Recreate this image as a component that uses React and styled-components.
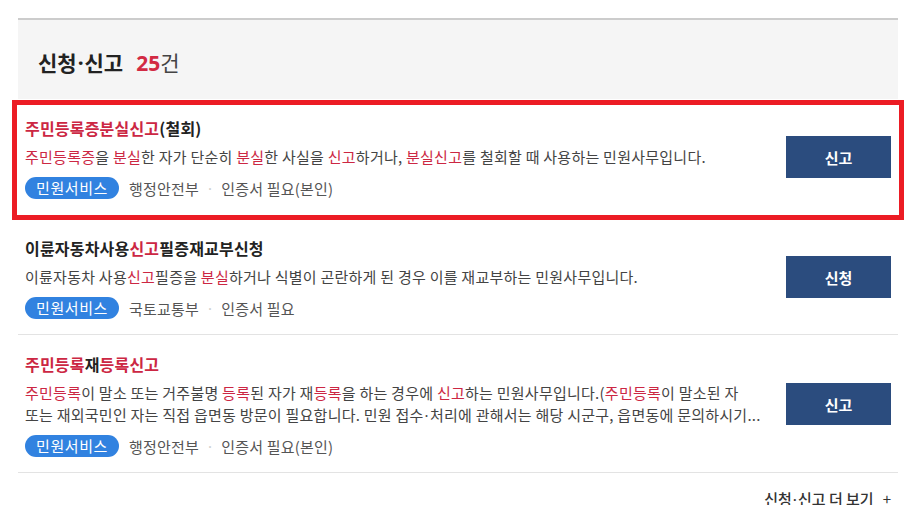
import React from 'react'
import styled, { createGlobalStyle } from 'styled-components'

const GlobalStyle = createGlobalStyle`
  html, body {
    margin: 0;
    padding: 0;
    background: #fff;
  }
  body {
    font-family: "Noto Sans CJK KR", "Noto Sans", sans-serif;
    color: #333;
  }
`

const Page = styled.div`
  padding: 18px 9px 0 18px;
  width: 880px;
`

const Panel = styled.section`
  border-top: 2px solid #cccccc;
`

const Header = styled.div`
  background: #f5f5f5;
  padding: 27px 20px 22px;
  height: 30px;
`

const HeaderTitle = styled.h2`
  margin: 0;
  font-size: 21px;
  line-height: 30px;
  font-weight: 700;
  color: #222;
`

// middle dot from a latin font so it stays narrow
const Mid = styled.span`
  font-family: "Noto Sans", sans-serif;
  margin: 0 1px;
`

const Count = styled.span`
  margin-left: 13px;
  color: #d22a43;
  font-family: "Open Sans", "Noto Sans CJK KR", sans-serif;
  font-weight: 700;
`

const CountUnit = styled.span`
  font-weight: 400;
  color: #444;
`

const List = styled.ul`
  list-style: none;
  margin: 0;
  padding: 0;
`

const Item = styled.li`
  position: relative;
  display: flex;
  align-items: center;
  gap: 24px;
  padding: 16px 7px ${(p) => (p.$highlight ? '19px' : '15px')};
  border-bottom: 1px solid #e3e3e3;

  ${(p) =>
    p.$highlight &&
    `
    &::after {
      content: '';
      position: absolute;
      top: 1px;
      bottom: -2px;
      left: -6px;
      right: -6px;
      border: 5px solid #ec1c24;
      pointer-events: none;
    }
  `}
`

const Body = styled.div`
  flex: 1;
  min-width: 0;
`

const Title = styled.h3`
  margin: 0;
  font-size: 16px;
  line-height: 26px;
  font-weight: 700;
  color: #222;
  letter-spacing: 0.2px;
`

const Hl = styled.span`
  color: #cc2743;
`

const Desc = styled.p`
  margin: 5px 0 0;
  font-size: 15px;
  line-height: 22px;
  color: #444;
  letter-spacing: 0.25px;
`

const DescLine = styled.span`
  display: block;
  white-space: nowrap;
`

const Meta = styled.div`
  display: flex;
  align-items: center;
  margin-top: 9px;
  font-size: 15px;
  color: #555;
  letter-spacing: 0.2px;
`

const Badge = styled.span`
  display: inline-block;
  height: 22px;
  line-height: 22px;
  padding: 0 11px;
  border-radius: 11px;
  background: #3182e0;
  color: #fff;
  font-size: 15px;
  letter-spacing: 0.6px;
  margin-right: 10px;
`

const Dot = styled.span`
  color: #cfcfcf;
  margin: 0 9px;
  font-family: "Noto Sans", sans-serif;
`

const Action = styled.button`
  flex: none;
  width: 105px;
  height: 42px;
  border: 0;
  background: #2b4c7e;
  color: #fff;
  font-family: inherit;
  font-size: 15px;
  font-weight: 700;
  cursor: pointer;
`

const More = styled.div`
  display: flex;
  justify-content: flex-end;
  padding: 15px 7px 0;
`

const MoreLink = styled.a`
  font-size: 15px;
  font-weight: 500;
  color: #333;
  text-decoration: none;
`

const Plus = styled.span`
  margin-left: 9px;
  font-weight: 400;
`

const items = [
  {
    title: (
      <>
        <Hl>주민등록증분실신고</Hl>(철회)
      </>
    ),
    desc: [
      <>
        <Hl>주민등록증</Hl>을 <Hl>분실</Hl>한 자가 단순히 <Hl>분실</Hl>한 사실을 <Hl>신고</Hl>
        하거나, <Hl>분실신고</Hl>를 철회할 때 사용하는 민원사무입니다.
      </>,
    ],
    org: '행정안전부',
    cert: '인증서 필요(본인)',
    action: '신고',
    highlight: true,
  },
  {
    title: (
      <>
        이륜자동차사용<Hl>신고</Hl>필증재교부신청
      </>
    ),
    desc: [
      <>
        이륜자동차 사용<Hl>신고</Hl>필증을 <Hl>분실</Hl>하거나 식별이 곤란하게 된 경우 이를
        재교부하는 민원사무입니다.
      </>,
    ],
    org: '국토교통부',
    cert: '인증서 필요',
    action: '신청',
  },
  {
    title: (
      <>
        <Hl>주민등록</Hl>재<Hl>등록신고</Hl>
      </>
    ),
    desc: [
      <>
        <Hl>주민등록</Hl>이 말소 또는 거주불명 <Hl>등록</Hl>된 자가 재<Hl>등록</Hl>을 하는 경우에{' '}
        <Hl>신고</Hl>하는 민원사무입니다.(<Hl>주민등록</Hl>이 말소된 자
      </>,
      <>
        또는 재외국민인 자는 직접 읍면동 방문이 필요합니다. 민원 접수<Mid>·</Mid>처리에 관해서는
        해당 시군구, 읍면동에 문의하시기...
      </>,
    ],
    org: '행정안전부',
    cert: '인증서 필요(본인)',
    action: '신고',
  },
]

export default function App() {
  return (
    <Page>
      <GlobalStyle />
      <Panel>
        <Header>
          <HeaderTitle>
            신청<Mid>·</Mid>신고
            <Count>25</Count>
            <CountUnit>건</CountUnit>
          </HeaderTitle>
        </Header>
        <List>
          {items.map((it, i) => (
            <Item key={i} $highlight={it.highlight}>
              <Body>
                <Title>{it.title}</Title>
                <Desc>
                  {it.desc.map((line, j) => (
                    <DescLine key={j}>{line}</DescLine>
                  ))}
                </Desc>
                <Meta>
                  <Badge>민원서비스</Badge>
                  {it.org}
                  <Dot>·</Dot>
                  {it.cert}
                </Meta>
              </Body>
              <Action>{it.action}</Action>
            </Item>
          ))}
        </List>
        <More>
          <MoreLink href="#">
            신청<Mid>·</Mid>신고 더 보기
            <Plus>+</Plus>
          </MoreLink>
        </More>
      </Panel>
    </Page>
  )
}
